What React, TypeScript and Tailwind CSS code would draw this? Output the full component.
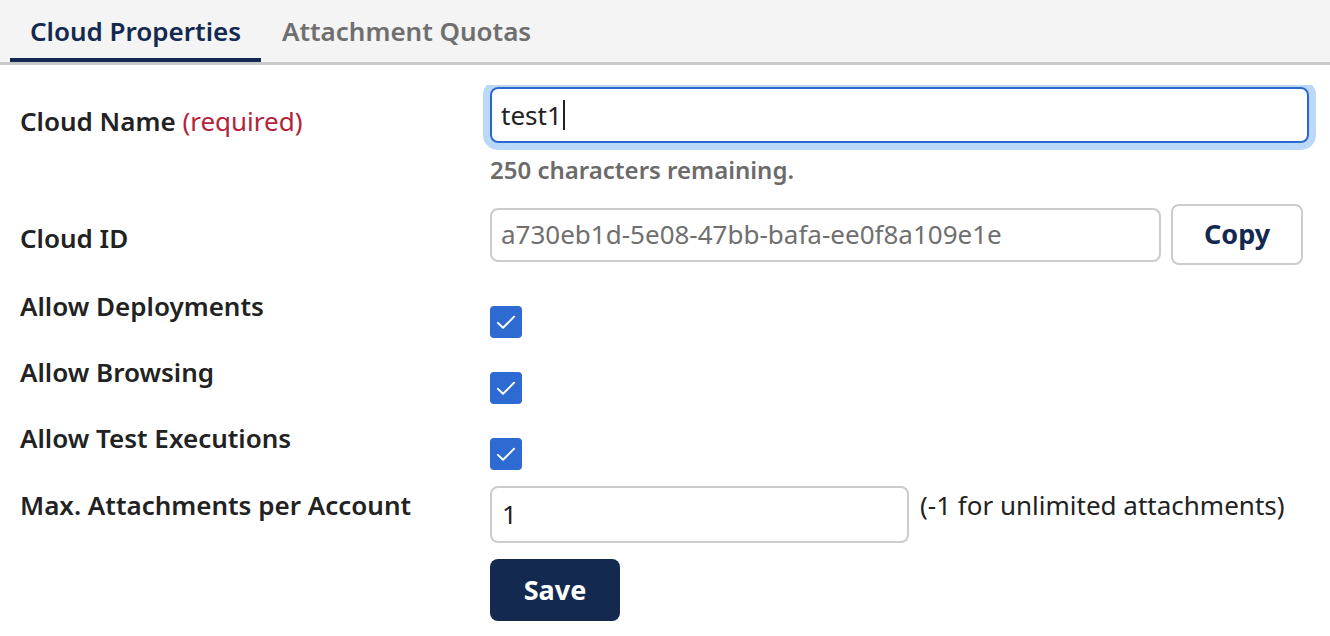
import React from "react";

const font = { fontFamily: '"Noto Sans", "Open Sans", sans-serif' };

function Check() {
  return (
    <div className="flex h-[32px] w-[32px] items-center justify-center rounded-[4px] bg-[#2d6bd2]">
      <svg width="28" height="28" viewBox="0 0 20 20" fill="none">
        <path d="M4.2 10.6 L7.9 14.1 L15.8 6.2" stroke="white" strokeWidth="1.4" strokeLinecap="round" strokeLinejoin="round" />
      </svg>
    </div>
  );
}

function Label({ children, className = "" }: { children: React.ReactNode; className?: string }) {
  return (
    <div className={"w-[490px] shrink-0 pl-[20px] text-[26px] font-semibold leading-[34px] text-[#222222] " + className}>
      {children}
    </div>
  );
}

export default function App() {
  return (
    <div className="min-h-[636px] w-full bg-white" style={font}>
      <div className="flex h-[65px] items-end border-b-[3px] border-[#c9c9c9] bg-[#f4f4f4] pl-[10px]">
        <div className="flex h-[62px] w-[251px] items-center justify-center border-b-[4px] border-[#13294f] pt-[5px] text-[26px] font-semibold text-[#13294f]">
          Cloud Properties
        </div>
        <div className="flex h-[62px] items-center pl-[21px] pt-[1px] text-[26px] font-semibold text-[#6f6f6f]">
          Attachment Quotas
        </div>
      </div>

      <div className="mt-[20px] overflow-hidden pt-[2px]">
        {/* Cloud Name */}
        <div className="flex">
          <Label className="pt-[17px]">
            Cloud Name <span className="font-normal text-[#b3243b]">(required)</span>
          </Label>
          <div className="flex flex-1 flex-col pr-[21px]">
            <div className="flex h-[56px] items-center rounded-[8px] border-2 border-[#2a67cf] px-[9px] text-[26px] text-[#222222] shadow-[0_0_0_7px_#bad8f7]">
              test1<span className="ml-[1px] inline-block h-[30px] w-[2px] bg-[#222222]" />
            </div>
            <div className="mt-[11px] text-[24px] font-semibold leading-[32px] text-[#6b6b6b]">
              250 characters remaining.
            </div>
          </div>
        </div>

        {/* Cloud ID */}
        <div className="mt-[18px] flex">
          <Label className="pt-[17px]">Cloud ID</Label>
          <div className="flex items-center gap-[10px]">
            <div className="flex h-[54px] w-[671px] items-center rounded-[8px] border-2 border-[#cccccc] px-[9px] text-[26px] text-[#6f6f6f]">
              a730eb1d-5e08-47bb-bafa-ee0f8a109e1e
            </div>
            <div className="flex h-[61px] w-[132px] items-center justify-center rounded-[8px] border-2 border-[#cccccc] text-[27px] font-bold text-[#13294f]">
              Copy
            </div>
          </div>
        </div>

        {/* Checkboxes */}
        {["Allow Deployments", "Allow Browsing", "Allow Test Executions"].map((t, i) => (
          <div key={t} className={(i === 0 ? "mt-[41px]" : "mt-[34px]") + " flex"}>
            <Label className="mt-[-17px]">{t}</Label>
            <Check />
          </div>
        ))}

        {/* Max attachments */}
        <div className="mt-[16px] flex">
          <Label className="pt-[2px]">Max. Attachments per Account</Label>
          <div className="flex flex-col">
            <div className="flex items-start gap-[11px]">
              <div className="flex h-[57px] w-[419px] items-center rounded-[8px] border-2 border-[#cccccc] px-[10px] text-[26px] text-[#222222]">
                1
              </div>
              <div className="pt-[2px] text-[26px] leading-[34px] text-[#222222]">(-1 for unlimited attachments)</div>
            </div>
            <div className="mt-[16px] flex h-[62px] w-[130px] items-center justify-center rounded-[8px] bg-[#13294f] text-[27px] font-bold text-white">
              Save
            </div>
          </div>
        </div>
      </div>
    </div>
  );
}
